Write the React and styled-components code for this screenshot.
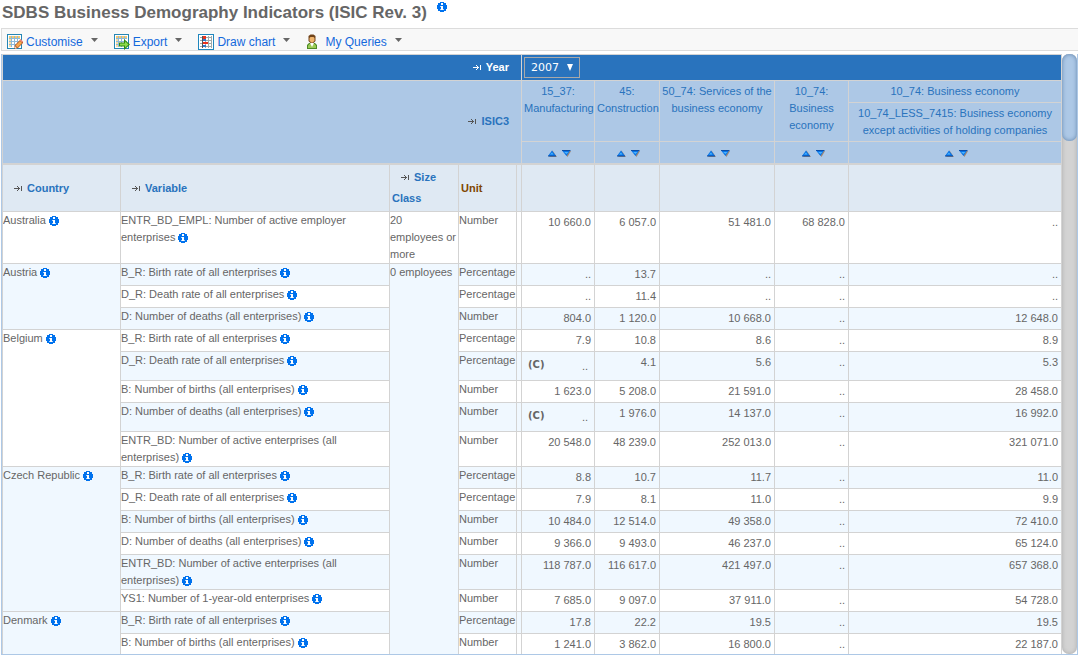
import React from "react";
import styled, { createGlobalStyle } from "styled-components";

const c = {
  text: "#666666",
  link: "#1469dc",
  blue: "#2973bd",
  light: "#adc8e6",
  pale: "#dfe9f3",
  stripe: "#f0f8ff",
  line: "#d3d3d3",
  info: "#0072ee",
};

const GlobalStyle = createGlobalStyle`
  *, *::before, *::after { box-sizing: border-box; }
  body {
    margin: 0;
    background: #fff;
    color: ${c.text};
    font: 11px/17px "Liberation Sans", Arial, Helvetica, sans-serif;
  }
  button { font: inherit; border: 0; padding: 0; background: none; cursor: pointer; }
`;

const Page = styled.div`
  display: flex;
  flex-direction: column;
  height: 100vh;
  padding-left: 1px;
`;

const Title = styled.h1`
  display: flex;
  align-items: flex-start;
  gap: 10px;
  height: 28px;
  margin: 0;
  padding: 2px 0 0 1px;
  font-size: 17px;
  line-height: 22px;
  white-space: nowrap;
`;

const Toolbar = styled.nav`
  display: flex;
  align-items: center;
  gap: 16px;
  height: 23px;
  flex: none;
  padding: 4px 5px 0;
  margin-bottom: 3px;
  border: 1px solid #dcdcdc;
  border-right: 0;
  background: #f8f8f8;
`;

const MenuButton = styled.button`
  display: flex;
  align-items: center;
  gap: 3px;
  color: ${c.link};
  font-size: 12px;
  line-height: 16px;
  white-space: nowrap;
`;

const Caret = styled.svg`
  width: 7px;
  height: 4px;
  margin: 0 0 4px 5px;
`;

const Panel = styled.main`
  display: flex;
  flex: 1;
  min-height: 0;
  border: solid ${c.light};
  border-width: 0 1px 1px;
`;

const Scroller = styled.div`
  flex: 1;
  min-width: 0;
  overflow: auto;
  scrollbar-width: none;
  border: solid ${c.line};
  border-width: 1px 0 0 1px;
`;

const Track = styled.div`
  flex: none;
  width: 15px;
  background: ${c.line};
  border-radius: 7px;
  box-shadow: inset 0 0 4px #aaa;
`;

const Thumb = styled.div`
  height: 87px;
  border-radius: 7px;
  background: ${c.light};
  box-shadow: inset 0 0 4px #5f83ab;
`;

const Table = styled.table`
  width: 100%;
  table-layout: fixed;
  border-collapse: separate;
  border-spacing: 0;
`;

const Col = styled.col`
  width: ${(p) => (p.$w ? `${p.$w}px` : "auto")};
`;

const HeadCell = styled.th`
  padding: 0 2px;
  border: solid ${c.line};
  border-width: 0 1px 1px 0;
`;

const YearCell = styled(HeadCell)`
  height: 26px;
  padding: 0 ${(p) => (p.$label ? 12 : 2)}px 0 2px;
  background: ${c.blue};
  color: #fff;
  text-align: ${(p) => (p.$label ? "right" : "left")};
`;

const AxisCell = styled(HeadCell)`
  padding: 0 12px 2px 2px;
  border-bottom-width: 2px;
  background: ${c.light};
  color: ${c.blue};
  text-align: right;
`;

const ColumnCell = styled(HeadCell)`
  height: ${(p) => p.$h || 22}px;
  padding-top: 2px;
  vertical-align: top;
  background: ${c.light};
  color: ${c.blue};
  font-weight: normal;
`;

const SortCell = styled(HeadCell)`
  height: 23px;
  padding-top: 2px;
  border-bottom-width: 2px;
  background: ${c.light};
`;

const FieldCell = styled(HeadCell)`
  height: 47px;
  background: ${c.pale};
  color: ${(p) => (p.$unit ? "#804600" : c.blue)};
  text-align: left;
  line-height: 21px;
`;

const SortPair = styled.div`
  display: flex;
  justify-content: center;
  align-items: center;
  gap: 5px;
  padding-left: 3px;
`;

const SortButton = styled.button`
  display: flex;
`;

const YearPicker = styled.label`
  display: inline-block;
  position: relative;
  vertical-align: middle;
`;

const YearSelect = styled.select`
  display: block;
  appearance: none;
  width: 56px;
  height: 21px;
  padding: 0 6px;
  border: 1px solid #a9a9a9;
  border-radius: 0;
  background: ${c.blue};
  color: #fff;
  font: 11px "DejaVu Sans", Verdana, sans-serif;
`;

const YearArrow = styled.svg`
  position: absolute;
  top: 7px;
  right: 7px;
  width: 6px;
  height: 7px;
  pointer-events: none;
`;

const Row = styled.tr`
  background: ${(p) => (p.$striped ? c.stripe : "#fff")};
`;

const Cell = styled.td`
  height: 22px;
  padding: 0;
  border: solid ${c.line};
  border-width: 0 1px 1px 0;
  background: ${(p) => (p.$striped ? c.stripe : "inherit")};
  vertical-align: top;
  text-align: left;
  font-weight: normal;
`;

const ValueCell = styled(Cell)`
  padding: 2px 3px 0;
  text-align: right;
  white-space: nowrap;
`;

const Flagged = styled.div`
  display: flex;
  justify-content: space-between;
  align-items: flex-end;
  padding: 0 3px 5px;
`;

const Flag = styled.abbr`
  font: bold 10px/21px "DejaVu Sans", Verdana, sans-serif;
  text-decoration: none;
`;

const InfoButton = styled.button`
  display: inline-block;
  width: 10px;
  height: 10px;
  vertical-align: -2px;
  line-height: 0;
`;

const Moves = styled.svg`
  width: 8px;
  height: 7px;
  margin: 0 5px 0 ${(p) => (p.$inset ? 9 : 0)}px;
`;

function Info({ about }) {
  return (
    <InfoButton aria-label={`Information on ${about}`}>
      <svg width="10" height="10" viewBox="0 0 10 10" shapeRendering="crispEdges">
        <path d="M3 0h4v1h2v2h1v4h-1v2h-2v1h-4v-1h-2v-2h-1v-4h1v-2h2z" fill={c.info} />
        <path d="M4 1h2v2h-2zM4 4h2v4h-2z" fill="#fff" />
        <path d="M3 4h1v1h-1zM3 7h1v1h-1zM6 7h1v1h-1z" fill="#b5d6fa" />
      </svg>
    </InfoButton>
  );
}

function MoveIcon({ color = "#555", inset }) {
  return (
    <Moves $inset={inset} viewBox="0 0 8 7" shapeRendering="crispEdges" aria-hidden="true">
      <path d="M0 3h6v1h-6zM4 2h1v3h-1zM3 1h1v1h-1zM3 5h1v1h-1zM7 1h1v5h-1z" fill={color} />
    </Moves>
  );
}

function Sorter() {
  return (
    <SortPair>
      <SortButton aria-label="Sort ascending">
        <svg width="9" height="7" viewBox="0 0 9 7">
          <path d="M4.5 0.5L9 7H1z" fill="#9b8778" />
          <path d="M4 0.5L8 6H0z" fill="#0874e8" />
          <path d="M4 2.5L5.5 4.5H2z" fill="#49b4ff" />
          <path d="M0 6h8" stroke="#0a4ea8" />
        </svg>
      </SortButton>
      <SortButton aria-label="Sort descending">
        <svg width="9" height="7" viewBox="0 0 9 7">
          <path d="M1 1h8L5.5 7z" fill="#9b8778" />
          <path d="M0 0.5h8L4.5 6z" fill="#0874e8" />
          <path d="M2 2h4.500L4.500 4z" fill="#49b4ff" />
          <path d="M0 0.5h8.500" stroke="#0a4ea8" />
        </svg>
      </SortButton>
    </SortPair>
  );
}

function Sheet() {
  return (
    <>
      <path d="M0 0h15v15h-15z" fill="#2586b4" />
      <path d="M1 1h13v13h-13z" fill="#fff" />
      <path d="M2 2h11v2h-11z" fill="#f5c86c" />
      <path d="M2 4h2v9h-2z" fill="#f9dda0" />
      <path d="M2 4h11v1h-11zM2 7h11v1h-11zM2 10h11v1h-11zM4 2h1v11h-1zM7 2h1v11h-1zM10 2h1v11h-1z" fill="#8db9d8" />
    </>
  );
}

const drawings = {
  customise: (
    <>
      <Sheet />
      <path d="M7 15l1-4 5.500-5.500 3 3-5.500 5.500z" fill="#b4572b" />
      <path d="M8.500 11.500l4.500-4.500 2 2-4.500 4.500z" fill="#f7a94c" />
      <path d="M12.500 6l1-1 2.500 2.500-1 1z" fill="#ef8b80" />
      <path d="M7 15l.8-3 2.200 2.200z" fill="#f4dcc0" />
      <path d="M7 15l.4-1.300.9.9z" fill="#333" />
    </>
  ),
  export: (
    <>
      <Sheet />
      <path d="M5 8.500h5v-3.500l6 5.500-6 5.500v-3.500h-5z" fill="#2f8a12" />
      <path d="M6 9.500h5v-2.200l3.500 3.200-3.500 3.200v-2.200h-5z" fill="#8edb4b" />
    </>
  ),
  chart: (
    <>
      <path d="M0 0h16v16h-16z" fill="#1f86bd" />
      <path d="M1 1h14v14h-14z" fill="#fff" />
      <path d="M2 3h12v1h-12zM2 6h12v1h-12zM2 9h12v1h-12zM2 12h12v1h-12zM7 2h1v12h-1zM10 2h1v12h-1zM13 2h1v12h-1z" fill="#a1aaa9" />
      <path d="M4 2h1v12h-1z" fill="#555" />
      <path d="M5 2h3v3h-3zM5 8h5v2h-5z" fill="#e9321f" />
      <path d="M5 5h3v2h-3zM5 11h3v2h-3z" fill="#2c78d0" />
    </>
  ),
  user: (
    <>
      <path d="M1 15v-4l2-2h6l2 2v4z" fill="#4d8a25" />
      <path d="M2 14v-2.500l1.500-1.500h5l1.500 1.500v2.500z" fill="#9ccb55" />
      <path d="M4 9h4l-2 4z" fill="#fff" />
      <path d="M2.500 2l2-1.500h3L9.500 2v5L7.500 9h-3L2.500 7z" fill="#70431a" />
      <path d="M3.500 4l1-1h3l1 1v2.500L7 8.500H5L3.500 6.500z" fill="#f0b46c" />
    </>
  ),
};

const menus = [
  ["Customise", "customise"],
  ["Export", "export"],
  ["Draw chart", "chart"],
  ["My Queries", "user"],
];

const BR = "B_R: Birth rate of all enterprises";
const DR = "D_R: Death rate of all enterprises";
const B = "B: Number of births (all enterprises)";
const D = "D: Number of deaths (all enterprises)";
const EN = "ENTR_BD: Number of active enterprises (all enterprises)";

const countries = [
  ["Australia", [
    ["ENTR_BD_EMPL: Number of active employer enterprises", "Number", "10 660.0", "6 057.0", "51 481.0", "68 828.0", ".."],
  ]],
  ["Austria", [
    [BR, "Percentage", "..", "13.7", "..", "..", ".."],
    [DR, "Percentage", "..", "11.4", "..", "..", ".."],
    [D, "Number", "804.0", "1 120.0", "10 668.0", "..", "12 648.0"],
  ]],
  ["Belgium", [
    [BR, "Percentage", "7.9", "10.8", "8.6", "..", "8.9"],
    [DR, "Percentage", "(C)", "4.1", "5.6", "..", "5.3"],
    [B, "Number", "1 623.0", "5 208.0", "21 591.0", "..", "28 458.0"],
    [D, "Number", "(C)", "1 976.0", "14 137.0", "..", "16 992.0"],
    [EN, "Number", "20 548.0", "48 239.0", "252 013.0", "..", "321 071.0"],
  ]],
  ["Czech Republic", [
    [BR, "Percentage", "8.8", "10.7", "11.7", "..", "11.0"],
    [DR, "Percentage", "7.9", "8.1", "11.0", "..", "9.9"],
    [B, "Number", "10 484.0", "12 514.0", "49 358.0", "..", "72 410.0"],
    [D, "Number", "9 366.0", "9 493.0", "46 237.0", "..", "65 124.0"],
    [EN, "Number", "118 787.0", "116 617.0", "421 497.0", "..", "657 368.0"],
    ["YS1: Number of 1-year-old enterprises", "Number", "7 685.0", "9 097.0", "37 911.0", "..", "54 728.0"],
  ]],
  ["Denmark", [
    [BR, "Percentage", "17.8", "22.2", "19.5", "..", "19.5"],
    [B, "Number", "1 241.0", "3 862.0", "16 800.0", "..", "22 187.0"],
  ]],
];

const rows = countries.flatMap(([country, list]) =>
  list.map(([variable, unit, ...values], i) => ({
    country: i === 0 ? country : null,
    span: list.length,
    variable,
    unit,
    values,
  }))
);

const columnWidths = [118, 269, 69, 58, 5, 73, 65, 115, 74, null];

function Value({ value }) {
  if (value !== "(C)") return value;
  return (
    <Flagged>
      <Flag>(C)</Flag>
      <span>..</span>
    </Flagged>
  );
}

function DataRow({ row, index }) {
  const striped = index % 2 === 1;
  return (
    <Row $striped={striped}>
      {row.country && (
        <Cell as="th" scope="rowgroup" rowSpan={row.span} $striped={striped}>
          {row.country} <Info about={row.country} />
        </Cell>
      )}
      <Cell as="th" scope="row">
        {row.variable} <Info about={row.variable} />
      </Cell>
      {index === 0 && <Cell>20 employees or more</Cell>}
      {index === 1 && <Cell rowSpan={rows.length - 1} $striped>0 employees</Cell>}
      <Cell>{row.unit}</Cell>
      <Cell />
      {row.values.map((value, i) => (
        <ValueCell key={i}>
          <Value value={value} />
        </ValueCell>
      ))}
    </Row>
  );
}

export default function App() {
  return (
    <Page>
      <GlobalStyle />
      <Title>
        SDBS Business Demography Indicators (ISIC Rev. 3)
        <Info about="this dataset" />
      </Title>
      <Toolbar>
        {menus.map(([label, icon]) => (
          <MenuButton key={label}>
            <svg width="16" height="16" viewBox="0 0 16 16" aria-hidden="true">
              {drawings[icon]}
            </svg>
            {label}
            <Caret viewBox="0 0 7 4">
              <path d="M0 0h7L3.500 4z" fill="#666" />
            </Caret>
          </MenuButton>
        ))}
      </Toolbar>
      <Panel>
        <Scroller>
          <Table>
            <colgroup>
              {columnWidths.map((w, i) => (
                <Col key={i} $w={w} />
              ))}
            </colgroup>
            <thead>
              <tr>
                <YearCell colSpan={5} $label>
                  <MoveIcon color="#fff" />
                  Year
                </YearCell>
                <YearCell colSpan={5}>
                  <YearPicker>
                    <YearSelect aria-label="Year" defaultValue="2007">
                      <option>2007</option>
                    </YearSelect>
                    <YearArrow viewBox="0 0 6 7">
                      <path d="M0 0h6L3 7z" fill="#fff" />
                    </YearArrow>
                  </YearPicker>
                </YearCell>
              </tr>
              <tr>
                <AxisCell colSpan={5} rowSpan={3}>
                  <MoveIcon />
                  ISIC3
                </AxisCell>
                <ColumnCell rowSpan={2}>15_37: Manufacturing</ColumnCell>
                <ColumnCell rowSpan={2}>45: Construction</ColumnCell>
                <ColumnCell rowSpan={2}>50_74: Services of the business economy</ColumnCell>
                <ColumnCell rowSpan={2}>10_74: Business economy</ColumnCell>
                <ColumnCell>10_74: Business economy</ColumnCell>
              </tr>
              <tr>
                <ColumnCell $h={39}>
                  10_74_LESS_7415: Business economy
                  <br />
                  except activities of holding companies
                </ColumnCell>
              </tr>
              <tr>
                {[0, 1, 2, 3, 4].map((i) => (
                  <SortCell key={i}>
                    <Sorter />
                  </SortCell>
                ))}
              </tr>
              <tr>
                <FieldCell><MoveIcon inset />Country</FieldCell>
                <FieldCell><MoveIcon inset />Variable</FieldCell>
                <FieldCell><MoveIcon inset />Size Class</FieldCell>
                <FieldCell $unit>Unit</FieldCell>
                {[0, 1, 2, 3, 4, 5].map((i) => (
                  <FieldCell as="td" key={i} />
                ))}
              </tr>
            </thead>
            <tbody>
              {rows.map((row, i) => (
                <DataRow key={i} row={row} index={i} />
              ))}
            </tbody>
          </Table>
        </Scroller>
        <Track>
          <Thumb />
        </Track>
      </Panel>
    </Page>
  );
}
